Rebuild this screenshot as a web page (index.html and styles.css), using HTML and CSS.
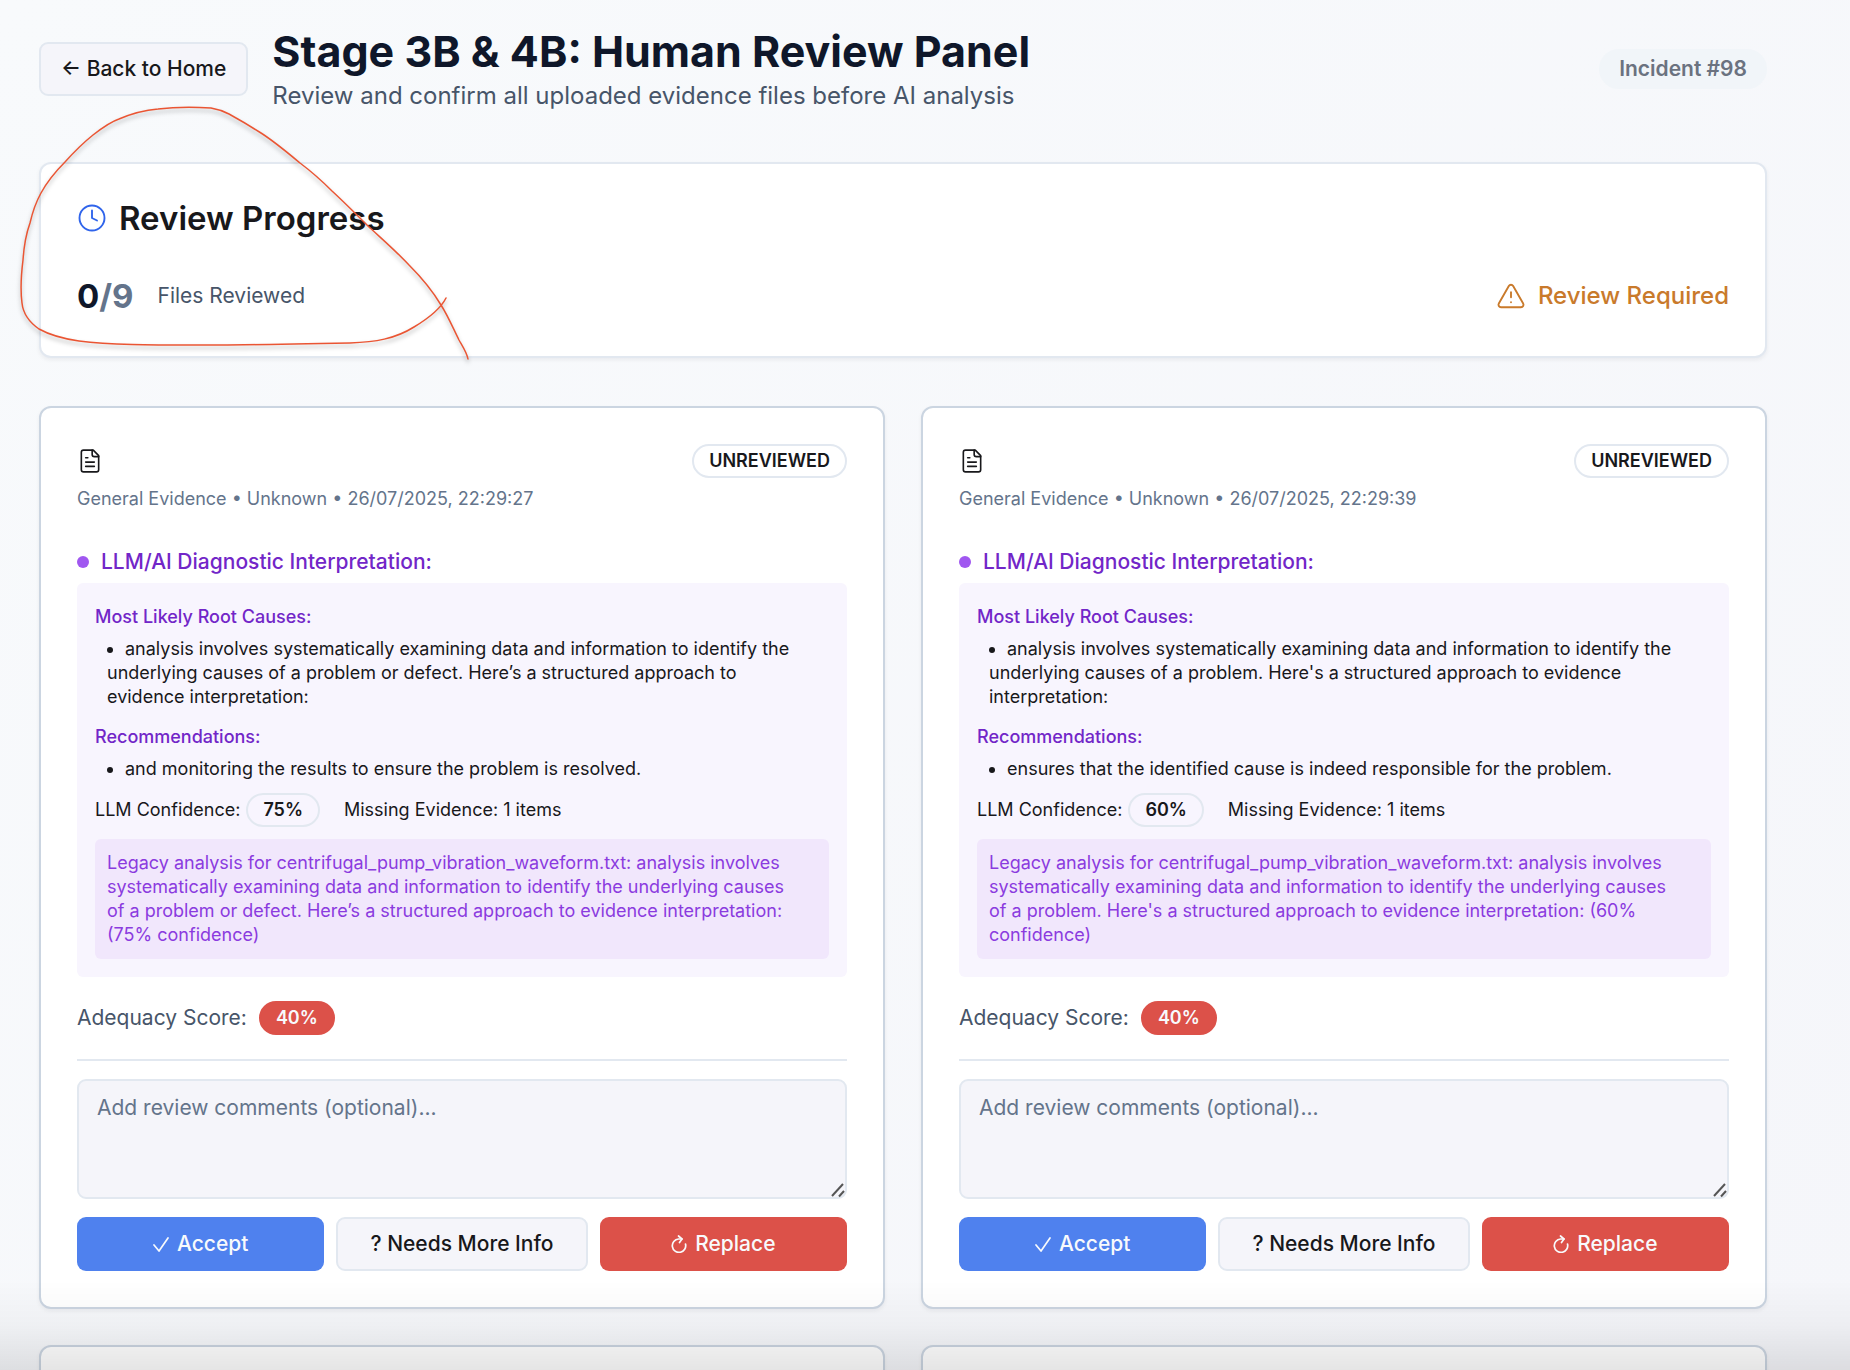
FILE: index.html
```html
<!DOCTYPE html>
<html lang="en">
<head>
<meta charset="utf-8">
<meta name="viewport" content="width=device-width, initial-scale=1">
<title>Human Review Panel</title>
<link rel="stylesheet" href="styles.css">
</head>
<body>
<svg class="sprite" aria-hidden="true">
  <symbol id="icon-file" viewBox="0 0 24 24"><path d="M15 2H6a2 2 0 0 0-2 2v16a2 2 0 0 0 2 2h12a2 2 0 0 0 2-2V7Z"/><path d="M14 2v4a2 2 0 0 0 2 2h4"/><path d="M10 9H8"/><path d="M16 13H8"/><path d="M16 17H8"/></symbol>
  <symbol id="icon-grip" viewBox="0 0 16 16"><path d="M2 14 13 2"/><path d="M9 14.500 14 9"/></symbol>
  <symbol id="icon-check" viewBox="0 0 16 18"><path d="M1 10 6 16 15 3"/></symbol>
  <symbol id="icon-replace" viewBox="0 0 16 18"><path d="M14.500 9A6.700 6.700 0 1 1 7.500 4H11"/><path d="M7.500 1 11 4 8.500 7.500"/></symbol>
</svg>
<main class="page">
  <header class="page-header">
    <button class="btn btn-outline" type="button">← Back to Home</button>
    <div class="heading">
      <h1>Stage 3B &amp; 4B: Human Review Panel</h1>
      <p>Review and confirm all uploaded evidence files before AI analysis</p>
    </div>
    <span class="badge badge-incident">Incident #98</span>
  </header>

  <section class="card progress">
    <h2>
      <svg class="icon icon-clock" viewBox="0 0 24 24"><circle cx="12" cy="12" r="10"/><path d="M12 6v6l4 2"/></svg>
      Review Progress
    </h2>
    <div class="progress-row">
      <div class="count">0<span>/9</span></div>
      <div class="count-label">Files Reviewed</div>
      <div class="status">
        <svg class="icon" viewBox="0 0 24 24"><path d="m21.730 18-8-14a2 2 0 0 0-3.480 0l-8 14A2 2 0 0 0 4 21h16a2 2 0 0 0 1.730-3"/><path d="M12 9v4"/><path d="M12 17h.01"/></svg>
        Review Required
      </div>
    </div>
  </section>

  <div class="grid">
    <article class="card evidence">
      <div class="evidence-top">
        <svg class="icon icon-file"><use href="#icon-file"/></svg>
        <span class="badge">UNREVIEWED</span>
      </div>
      <p class="meta">General Evidence • Unknown • 26/07/2025, 22:29:27</p>
      <h3>LLM/AI Diagnostic Interpretation:</h3>
      <div class="analysis">
        <h4>Most Likely Root Causes:</h4>
        <ul><li>analysis involves systematically examining data and information to identify the underlying causes of a problem or defect. Here’s a structured approach to evidence interpretation:</li></ul>
        <h4>Recommendations:</h4>
        <ul><li>and monitoring the results to ensure the problem is resolved.</li></ul>
        <div class="confidence">
          <span>LLM Confidence: <span class="badge">75%</span></span>
          <span>Missing Evidence: 1 items</span>
        </div>
        <p class="legacy">Legacy analysis for centrifugal_pump_vibration_waveform.txt: analysis involves systematically examining data and information to identify the underlying causes of a problem or defect. Here’s a structured approach to evidence interpretation: (75% confidence)</p>
      </div>
      <div class="score">Adequacy Score: <span class="badge badge-danger">40%</span></div>
      <hr>
      <div class="comment">
        <textarea aria-label="Review comments" placeholder="Add review comments (optional)..."></textarea>
        <svg class="grip"><use href="#icon-grip"/></svg>
      </div>
      <div class="actions">
        <button class="btn btn-primary" type="button"><svg class="btn-icon"><use href="#icon-check"/></svg>Accept</button>
        <button class="btn btn-outline" type="button">? Needs More Info</button>
        <button class="btn btn-danger" type="button"><svg class="btn-icon"><use href="#icon-replace"/></svg>Replace</button>
      </div>
    </article>

    <article class="card evidence">
      <div class="evidence-top">
        <svg class="icon icon-file"><use href="#icon-file"/></svg>
        <span class="badge">UNREVIEWED</span>
      </div>
      <p class="meta">General Evidence • Unknown • 26/07/2025, 22:29:39</p>
      <h3>LLM/AI Diagnostic Interpretation:</h3>
      <div class="analysis">
        <h4>Most Likely Root Causes:</h4>
        <ul><li>analysis involves systematically examining data and information to identify the underlying causes of a problem. Here's a structured approach to evidence interpretation:</li></ul>
        <h4>Recommendations:</h4>
        <ul><li>ensures that the identified cause is indeed responsible for the problem.</li></ul>
        <div class="confidence">
          <span>LLM Confidence: <span class="badge">60%</span></span>
          <span>Missing Evidence: 1 items</span>
        </div>
        <p class="legacy">Legacy analysis for centrifugal_pump_vibration_waveform.txt: analysis involves systematically examining data and information to identify the underlying causes of a problem. Here's a structured approach to evidence interpretation: (60% confidence)</p>
      </div>
      <div class="score">Adequacy Score: <span class="badge badge-danger">40%</span></div>
      <hr>
      <div class="comment">
        <textarea aria-label="Review comments" placeholder="Add review comments (optional)..."></textarea>
        <svg class="grip"><use href="#icon-grip"/></svg>
      </div>
      <div class="actions">
        <button class="btn btn-primary" type="button"><svg class="btn-icon"><use href="#icon-check"/></svg>Accept</button>
        <button class="btn btn-outline" type="button">? Needs More Info</button>
        <button class="btn btn-danger" type="button"><svg class="btn-icon"><use href="#icon-replace"/></svg>Replace</button>
      </div>
    </article>

    <article class="card evidence"></article>
    <article class="card evidence"></article>
  </div>
</main>
<svg class="scribble" viewBox="0 0 490 370" aria-hidden="true">
  <path d="M446 298C441 308 429 318 414 327C395 339 375 342 350 343C300 344 250 345 198 345C150 345 110 345 79 341C58 338 48 334 39 329C29 322 23 313 22 303C20 288 21 276 23 260C24 245 26 234 30 223C33 210 36 202 41 193C47 182 55 172 65 162C74 152 83 143 93 135C102 128 110 122 119 119C133 113 146 110 158 109C175 107 193 107 211 108C217 109 223 111 229 114C240 120 250 126 261 133C275 142 288 153 300 163C312 172 322 181 332 191C345 203 356 214 368 226C382 239 396 251 409 265C421 277 432 290 441 305C448 316 453 328 459 340C463 347 467 353 468 359"/>
</svg>
<div class="bottom-fade"></div>
</body>
</html>
```
FILE: styles.css
```css
*, *::before, *::after { box-sizing: border-box; }

:root {
  --border: #e2e8f0;
  --border-strong: #cbd5e1;
  --ink: #18181b;
  --surface: #f5f5fa;
  --danger: #dc5149;
}

body, h1, h2, h3, h4, p, ul { margin: 0; padding: 0; }

body {
  min-height: 100vh;
  font-family: Inter, "Liberation Sans", sans-serif;
  font-size: 24px;
  line-height: 36px;
  color: var(--ink);
  background: linear-gradient(135deg, #f8fafc, #f5f6fa);
}

.sprite { position: absolute; width: 0; height: 0; }

.page {
  height: 100vh;
  overflow: hidden;
  padding: 24px 83px 0 39px;
  display: flex;
  flex-direction: column;
  gap: 48px;
}
.page > * { flex-shrink: 0; }

.icon {
  width: 30px;
  height: 30px;
  flex: none;
  fill: none;
  stroke: currentColor;
  stroke-width: 1.5;
  stroke-linecap: round;
  stroke-linejoin: round;
}
.icon-file { width: 26px; height: 26px; }
.icon-clock { color: #2f64eb; }

/* Header */
.page-header { display: flex; align-items: center; gap: 24px; }
.heading { flex: 1; }
h1 { font-size: 43px; line-height: 54px; font-weight: 700; color: #0f172a; }
.heading p { color: #475569; }

/* Badges */
.badge {
  display: inline-block;
  padding: 3px 15px;
  border: 2px solid var(--border);
  border-radius: 20px;
  font-size: 18px;
  line-height: 24px;
  font-weight: 600;
}
.badge-incident {
  padding: 3px 18px;
  font-size: 21px;
  line-height: 30px;
  color: #6b7280;
  background: #f1f5f9;
  border-color: #f1f5f9;
}
.badge-danger { background: var(--danger); border-color: var(--danger); color: #f8fafc; }

/* Buttons */
.btn {
  display: inline-flex;
  align-items: center;
  justify-content: center;
  gap: 8px;
  height: 54px;
  padding: 0 20px;
  border: 0;
  border-radius: 9px;
  font-family: inherit;
  font-size: 21px;
  line-height: 30px;
  font-weight: 500;
  color: #f8fafc;
}
.btn-outline { border: 2px solid var(--border); background: var(--surface); color: var(--ink); }
.btn-primary { background: #4f81ee; }
.btn-danger { background: var(--danger); }
.btn-icon {
  width: 16px;
  height: 18px;
  fill: none;
  stroke: currentColor;
  stroke-width: 1.7;
  stroke-linecap: round;
  stroke-linejoin: round;
}

/* Cards */
.card {
  padding: 36px;
  border: 2px solid var(--border);
  border-radius: 12px;
  background: #fff;
  box-shadow: 0 2px 4px rgba(15, 23, 42, 0.06);
}

.progress { display: flex; flex-direction: column; gap: 36px; }
h2 {
  display: flex;
  align-items: center;
  gap: 12px;
  font-size: 33px;
  line-height: 36px;
  font-weight: 600;
}
.progress-row { display: flex; align-items: center; gap: 24px; }
.count { font-size: 33px; line-height: 48px; font-weight: 700; color: #0f172a; }
.count span { color: #64748b; }
.count-label { font-size: 21px; line-height: 30px; color: #475569; }
.status {
  margin-left: auto;
  display: flex;
  align-items: center;
  gap: 12px;
  font-weight: 500;
  color: #c97a2b;
}

.grid { display: grid; grid-template-columns: 1fr 1fr; gap: 36px; }
.evidence { min-height: 76px; border-color: var(--border-strong); }
.evidence-top { display: flex; align-items: center; justify-content: space-between; }
.meta { margin-top: 9px; font-size: 18px; line-height: 24px; color: #64748b; }

h3 {
  margin-top: 36px;
  display: flex;
  align-items: center;
  gap: 12px;
  font-size: 21px;
  line-height: 30px;
  font-weight: 500;
  color: #7226c8;
}
h3::before { content: ""; width: 12px; height: 12px; border-radius: 50%; background: #a057f0; }

.analysis {
  margin-top: 6px;
  padding: 18px;
  border-radius: 6px;
  background: #f8f5fe;
  font-size: 18px;
  line-height: 24px;
}
h4 { font-size: 18px; line-height: 32px; font-weight: 500; color: #7226c8; }
.analysis ul { margin: 4px 18px 12px 12px; list-style: none; }
.analysis li::before {
  content: "";
  display: inline-block;
  width: 6px;
  height: 6px;
  margin-right: 12px;
  border-radius: 50%;
  background: currentColor;
  vertical-align: middle;
}

.confidence { display: flex; align-items: center; gap: 24px; }
.confidence > span { display: flex; align-items: center; gap: 6px; }

.legacy {
  margin-top: 12px;
  padding: 12px 30px 12px 12px;
  border-radius: 6px;
  background: #f1e7fc;
  color: #8b3bdf;
}

.score {
  margin: 24px 0;
  display: flex;
  align-items: center;
  gap: 12px;
  font-size: 21px;
  line-height: 30px;
  color: #475569;
}

hr { margin: 0 0 18px; border: 0; border-top: 2px solid var(--border); }

.comment { position: relative; display: flex; margin-bottom: 18px; }
textarea {
  width: 100%;
  height: 120px;
  padding: 12px 18px;
  border: 2px solid var(--border);
  border-radius: 9px;
  resize: none;
  background: var(--surface);
  font-family: inherit;
  font-size: 21px;
  line-height: 30px;
  color: var(--ink);
}
textarea::placeholder { color: #64748b; opacity: 1; }
.grip {
  position: absolute;
  right: 1px;
  bottom: 1px;
  width: 16px;
  height: 16px;
  fill: none;
  stroke: #555;
  stroke-width: 2;
  pointer-events: none;
}

.actions { display: flex; gap: 12px; }
.actions .btn { flex: 1; }

/* Freehand annotation */
.scribble {
  position: absolute;
  left: 0;
  top: 0;
  width: 490px;
  height: 370px;
  fill: none;
  stroke: #ea5533;
  stroke-width: 1.5;
  stroke-linecap: round;
  filter: drop-shadow(0 3px 2px rgba(0, 0, 0, 0.3));
  pointer-events: none;
}

.bottom-fade {
  position: fixed;
  left: 0;
  right: 0;
  bottom: 0;
  height: 90px;
  background: linear-gradient(rgba(0, 0, 0, 0), rgba(0, 0, 0, 0.03) 50%, rgba(0, 0, 0, 0.1));
  pointer-events: none;
}
```
